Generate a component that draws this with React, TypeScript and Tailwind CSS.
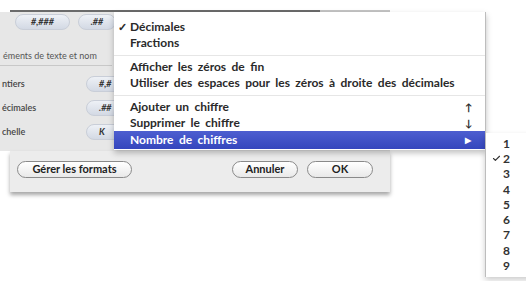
import { Check } from "lucide-react";

const font = { fontFamily: '"Lato", "Liberation Sans", sans-serif' };

const Pill = ({ label, className }: { label: string; className: string }) => (
  <div
    className={`flex h-[16px] items-center justify-center rounded-full border border-[#c9ced8] bg-gradient-to-b from-[#eef1f6] to-[#d3d9e4] text-[9px] font-bold italic text-[#333] ${className}`}
  >
    {label}
  </div>
);

const MenuItem = ({ label, checked, hint }: { label: string; checked?: boolean; hint?: string }) => (
  <div className="flex h-[16px] items-center text-[12px] font-bold leading-[16px] text-[#2a2a2a] [word-spacing:2.5px]">
    <span className="w-[16px] pl-[4px] text-[11px]">{checked ? "✓" : ""}</span>
    <span className="flex-1">{label}</span>
    {hint && <span className="w-[20px] text-[10px]">{hint}</span>}
  </div>
);

const Separator = () => (
  <div className="flex h-[8px] items-center">
    <div className="h-px w-full bg-[#e6e6e6]" />
  </div>
);

const Button = ({ label, className }: { label: string; className: string }) => (
  <div
    className={`flex h-[17px] items-center justify-center rounded-full border-[1.5px] border-[#8a8a8a] bg-gradient-to-b from-white to-[#e9e9e9] text-[11px] font-bold text-[#222] ${className}`}
  >
    {label}
  </div>
);

export default function App() {
  return (
    <div className="relative h-[281px] w-[526px] overflow-hidden bg-white" style={font}>
      {/* dialog */}
      <div className="pt-[10px]">
        <div className="ml-[10px] flex h-[2px] w-[380px]">
          <div className="h-full w-[310px] bg-[#6b6b6b]" />
          <div className="h-full flex-1 bg-[#c4c4c4]" />
        </div>
        <div className="w-[390px] bg-[#e7e7e7] pb-[11px]">
          <div className="flex gap-[8px] pl-[15px] pt-[2px]">
            <Pill label="#,###" className="w-[55px]" />
            <Pill label=".##" className="w-[38px]" />
          </div>
          <div className="mt-[19px] w-[112px] border-b border-[#c8c8c8] pb-[2px] pl-[3px] text-[9px] text-[#555]">
            éments de texte et nom
          </div>
          <div className="flex flex-col gap-[9px] pt-[11px]">
            {[
              ["ntiers", "#,#"],
              ["écimales", ".##"],
              ["chelle", "K"],
            ].map(([l, p]) => (
              <div key={l} className="flex h-[15px] items-center">
                <span className="w-[86px] pl-[2px] text-[9px] font-semibold text-[#444]">{l}</span>
                <Pill label={p} className="w-[40px] !justify-start pl-[12px]" />
              </div>
            ))}
          </div>
        </div>
        <div className="ml-[10px] flex h-[41px] w-[380px] items-center bg-[#ececec] pb-[4px] shadow-[0_3px_4px_rgba(0,0,0,0.35)]">
          <Button label="Gérer les formats" className="ml-[7px] w-[115px]" />
          <div className="flex-1" />
          <Button label="Annuler" className="w-[66px]" />
          <Button label="OK" className="ml-[9px] mr-[17px] w-[66px]" />
        </div>
      </div>

      {/* menu */}
      <div className="absolute left-[114px] top-[12px] w-[372px] border-r border-[#bdbdbd] bg-white pb-[1px] pt-[7px] shadow-[0_3px_6px_rgba(0,0,0,0.25)]">
        <MenuItem label="Décimales" checked />
        <MenuItem label="Fractions" />
        <Separator />
        <MenuItem label="Afficher les zéros de fin" />
        <MenuItem label="Utiliser des espaces pour les zéros à droite des décimales" />
        <Separator />
        <MenuItem label="Ajouter un chiffre" hint="↑" />
        <MenuItem label="Supprimer le chiffre" hint="↓" />
        <div className="flex h-[18px] items-center bg-gradient-to-b from-[#4d5ed0] to-[#3546bd] text-[12px] font-bold text-white [word-spacing:2.5px]">
          <span className="w-[16px]" />
          <span className="flex-1">Nombre de chiffres</span>
          <span className="w-[20px] text-[8px]">▶</span>
        </div>
      </div>

      {/* submenu */}
      <div className="absolute left-[485px] top-[133px] h-[144px] w-[50px] border-l border-[#bdbdbd] bg-white pt-[3px] shadow-[0_3px_6px_rgba(0,0,0,0.2)]">
        {[1, 2, 3, 4, 5, 6, 7, 8, 9].map((n) => (
          <div key={n} className="flex h-[15.3px] items-center text-[12px] font-bold text-[#333]">
            <span className="flex w-[17px] justify-end pr-[2px]">
              {n === 2 && <Check size={9} strokeWidth={3} />}
            </span>
            <span>{n}</span>
          </div>
        ))}
      </div>
    </div>
  );
}
